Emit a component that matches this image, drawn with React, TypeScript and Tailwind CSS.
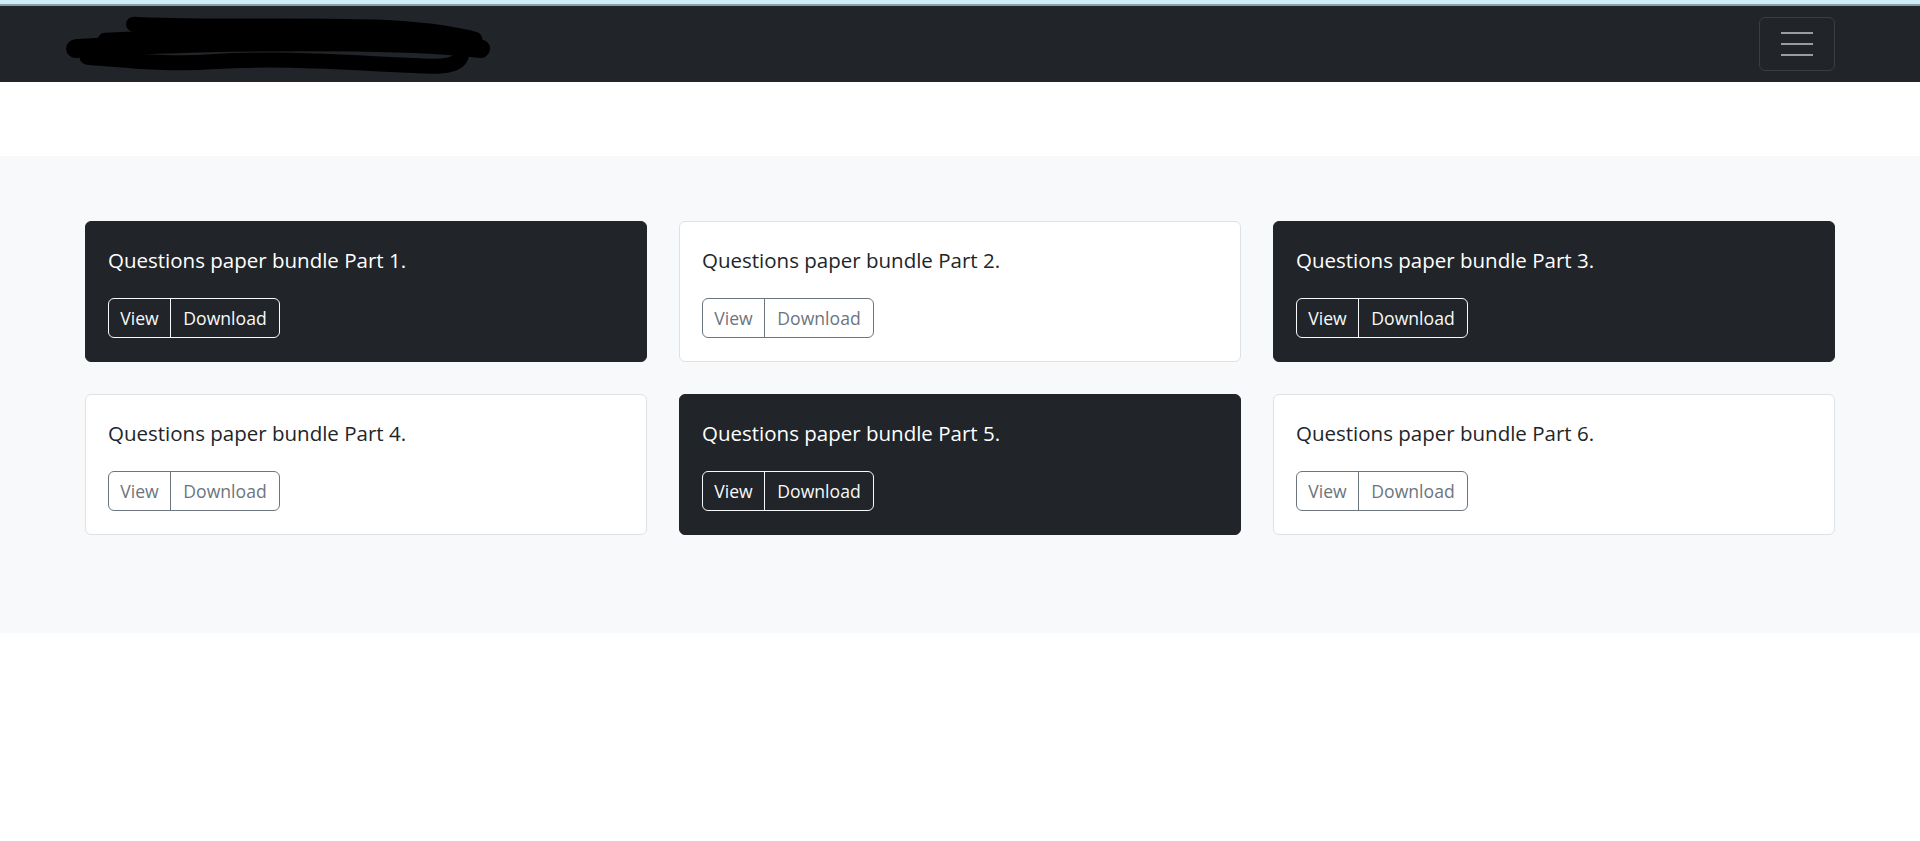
import React from 'react';

interface Bundle {
  part: number;
  dark: boolean;
}

const bundles: Bundle[] = [
  { part: 1, dark: true },
  { part: 2, dark: false },
  { part: 3, dark: true },
  { part: 4, dark: false },
  { part: 5, dark: true },
  { part: 6, dark: false },
];

// Logo blacked out in the screenshot
const Scribble = () => (
  <svg width="426" height="62" viewBox="0 0 440 66" preserveAspectRatio="none" className="block">
    <g fill="none" stroke="#000" strokeLinecap="round" strokeLinejoin="round">
      <path d="M70 12 C130 16 230 12 320 15 C370 17 400 22 422 28" strokeWidth="16" />
      <path d="M10 38 C80 33 180 30 300 31 C360 32 400 34 428 38" strokeWidth="20" />
      <path d="M22 47 C70 51 110 55 150 52 C220 47 290 53 360 56 C390 58 405 56 408 46" strokeWidth="16" />
      <path d="M40 28 C120 24 260 20 410 28" strokeWidth="14" />
    </g>
  </svg>
);

const BundleCard = ({ part, dark }: Bundle) => {
  const cardCls = dark
    ? 'bg-[#212529] border-[#212529] text-white'
    : 'bg-white border-[#dee2e6] text-[#212529]';
  const btnCls = dark
    ? 'border-[#f8f9fa] text-[#f8f9fa]'
    : 'border-[#6c757d] text-[#6c757d]';

  return (
    <div className={`border rounded-[6px] px-[22px] pt-[25px] pb-[23px] ${cardCls}`}>
      <h5 className="text-[20.5px] leading-[26px] font-normal mb-[25px]">
        Questions paper bundle Part {part}.
      </h5>
      <div className={`inline-flex h-[40px] border rounded-[6px] text-[17.6px] ${btnCls}`}>
        <button className={`w-[62px] border-r flex items-center justify-center ${btnCls}`}>
          View
        </button>
        <button className="w-[108px] flex items-center justify-center">
          Download
        </button>
      </div>
    </div>
  );
};

export default function App() {
  return (
    <div className="min-h-screen bg-white font-['Open_Sans',sans-serif]">
      {/* browser chrome strip */}
      <div className="h-[4px] bg-[#cdeef6]" />
      <div className="h-[2px] bg-[#8d9ea3]" />

      {/* Navbar */}
      <nav className="h-[76px] bg-[#212529] flex items-center justify-between pl-[66px] pr-[85px]">
        <Scribble />
        <button className="w-[76px] h-[54px] border border-[#3a3d41] rounded-[6px] flex flex-col items-center justify-center gap-[9px]">
          <span className="block w-[32px] h-[2px] bg-[#9b9c9e]" />
          <span className="block w-[32px] h-[2px] bg-[#9b9c9e]" />
          <span className="block w-[32px] h-[2px] bg-[#9b9c9e]" />
        </button>
      </nav>

      {/* Title strip (redacted) */}
      <div className="h-[74px] bg-white" />

      {/* Bundles */}
      <section className="bg-[#f8f9fa] pt-[65px] pb-[98px] px-[85px]">
        <div className="grid grid-cols-3 gap-[32px]">
          {bundles.map((b) => (
            <BundleCard key={b.part} {...b} />
          ))}
        </div>
      </section>
    </div>
  );
}
